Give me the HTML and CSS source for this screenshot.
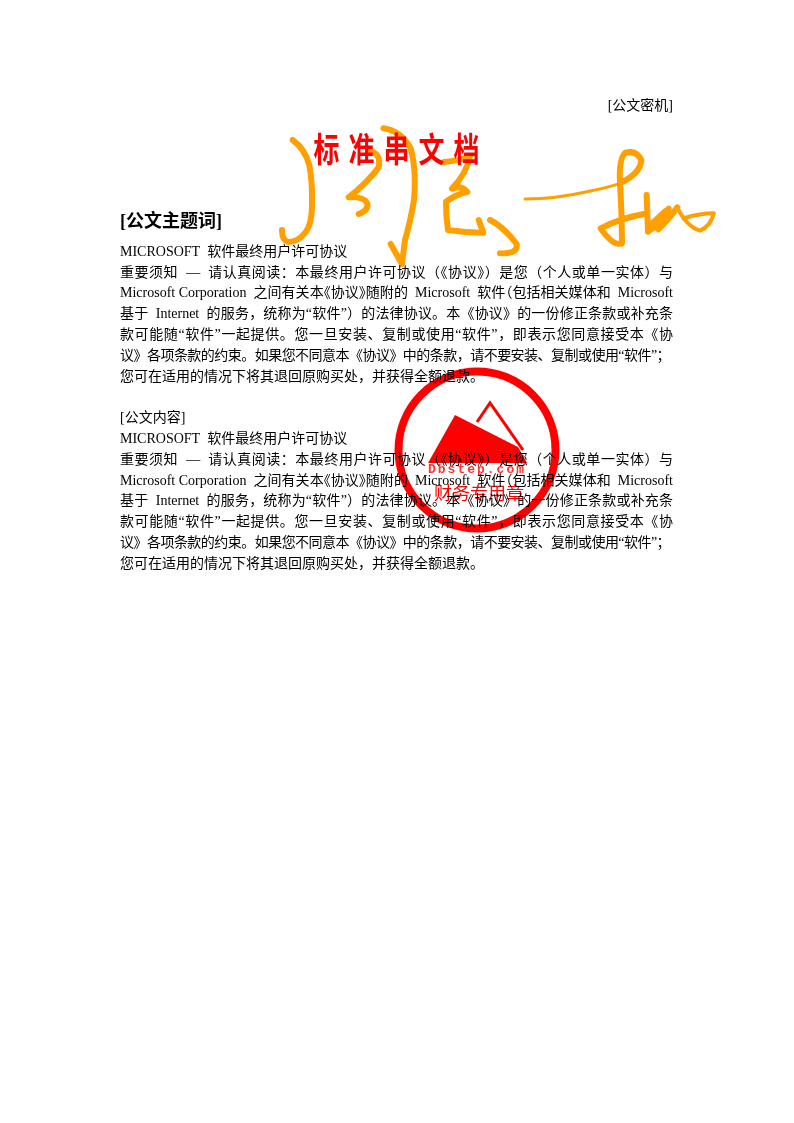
FILE: index.html
```html
<!DOCTYPE html>
<html lang="zh-CN">
<head>
    <meta charset="UTF-8">
    <meta name="viewport" content="width=device-width, initial-scale=1.0">
    <title>标准串文档</title>
    <link rel="stylesheet" href="styles.css">
</head>
<body>
    <div class="page">
        <!-- Handwritten signature -->
        <svg class="signature" viewBox="0 0 1380 570" aria-hidden="true">
            <path class="pen" d="M68 150 Q104 176 118 225 Q128 280 126 345 Q126 400 108 425 Q85 456 55 456 Q36 452 36 420"/>
            <path class="pen" d="M296 182 Q335 190 326 232 Q290 280 236 322 Q280 318 292 340 Q296 362 266 372"/>
            <path class="pen" d="M340 115 Q392 122 422 175 Q440 240 432 330 Q420 400 405 450 L396 522 L362 462"/>
            <path class="pen" d="M522 216 Q570 212 600 198 Q590 250 546 296 Q575 285 592 306 Q560 312 528 335 Q528 380 534 420 Q585 428 640 428 L626 390"/>
            <path class="pen" d="M660 390 Q700 410 740 462 Q745 492 690 490"/>
            <path class="pen-thin" d="M765 327 Q860 326 950 305 Q1010 294 1050 280"/>
            <path class="pen" d="M1050 280 Q1112 250 1114 210 Q1100 180 1066 188 Q1046 205 1050 280 Q1056 370 1056 460 Q1030 470 992 415 Q1050 385 1122 372"/>
            <path class="pen" d="M1130 315 L1134 425 Q1170 400 1196 356 Q1180 395 1165 418 Q1195 390 1222 352"/>
            <path class="pen-fine" d="M1222 352 Q1250 410 1290 422 Q1320 410 1332 370 Q1290 370 1240 385"/>
            <path class="pen-blob" d="M1145 410 L1190 368"/>
        </svg>

        <!-- Round stamp -->
        <svg class="stamp" viewBox="0 0 170 170">
            <circle class="stamp-ring" cx="85" cy="85" r="78.5"/>
            <path class="stamp-peak" d="M85 57 L98 38 L131 85"/>
            <path class="stamp-hill" d="M36 98 L63 50 L126 82 L135 98 Z"/>
            <text class="stamp-url" x="36" y="108">Dbstep.com</text>
            <text class="stamp-name" x="42" y="135">财务专用章</text>
        </svg>

        <p class="secret">[公文密机]</p>
        <h1 class="doc-title">标准串文档</h1>
        <h2 class="subject">[公文主题词]</h2>

        <div class="section">
            <p>MICROSOFT&nbsp; 软件最终用户许可协议</p>
            <p class="just">重要须知&nbsp; —&nbsp; 请认真阅读：本最终用户许可协议（《协议》）是您（个人或单一实体）与</p>
            <p class="just tight">Microsoft Corporation&nbsp; 之间有关本《协议》随附的&nbsp; Microsoft&nbsp; 软件（包括相关媒体和&nbsp; Microsoft</p>
            <p class="just">基于&nbsp; Internet&nbsp; 的服务，统称为“软件”）的法律协议。本《协议》的一份修正条款或补充条</p>
            <p class="just">款可能随“软件”一起提供。您一旦安装、复制或使用“软件”，即表示您同意接受本《协</p>
            <p class="just short">议》各项条款的约束。如果您不同意本《协议》中的条款，请不要安装、复制或使用“软件”；</p>
            <p>您可在适用的情况下将其退回原购买处，并获得全额退款。</p>
        </div>

        <div class="section">
            <p>[公文内容]</p>
            <p>MICROSOFT&nbsp; 软件最终用户许可协议</p>
            <p class="just">重要须知&nbsp; —&nbsp; 请认真阅读：本最终用户许可协议（《协议》）是您（个人或单一实体）与</p>
            <p class="just tight">Microsoft Corporation&nbsp; 之间有关本《协议》随附的&nbsp; Microsoft&nbsp; 软件（包括相关媒体和&nbsp; Microsoft</p>
            <p class="just">基于&nbsp; Internet&nbsp; 的服务，统称为“软件”）的法律协议。本《协议》的一份修正条款或补充条</p>
            <p class="just">款可能随“软件”一起提供。您一旦安装、复制或使用“软件”，即表示您同意接受本《协</p>
            <p class="just short">议》各项条款的约束。如果您不同意本《协议》中的条款，请不要安装、复制或使用“软件”；</p>
            <p>您可在适用的情况下将其退回原购买处，并获得全额退款。</p>
        </div>
    </div>
</body>
</html>
```

FILE: styles.css
```css
html, body {
    margin: 0;
    padding: 0;
    background-color: #fff;
}
.page {
    position: relative;
    width: 794px;
    height: 1123px;
    box-sizing: border-box;
    padding: 96px 121px 0 120px;
    font-family: "Liberation Serif", "Noto Sans CJK SC", serif;
    font-size: 14px;
    line-height: 20.8px;
    color: #000;
    overflow: hidden;
}
p {
    margin: 0;
}
.secret {
    text-align: right;
}
.doc-title {
    position: relative;
    margin: 15px 0 0 0;
    padding-left: 9px;
    height: 40px;
    font-size: 26px;
    line-height: 40px;
    font-weight: bold;
    letter-spacing: 9px;
    text-align: center;
    color: #f00;
    transform: scaleY(1.3);
}
.subject {
    margin: 36px 0 0 0;
    font-size: 18px;
    line-height: 26px;
    font-weight: bold;
}
.section {
    position: relative;
    margin-top: 8px;
}
.section + .section {
    margin-top: 20.8px;
}
.just {
    text-align: justify;
    text-align-last: justify;
}
.tight {
    font-feature-settings: "halt";
}
.short {
    width: 550px;
    letter-spacing: -0.6px;
}
.signature {
    position: absolute;
    left: 270px;
    top: 90px;
    width: 460px;
    height: 190px;
}
.pen, .pen-thin, .pen-fine, .pen-blob {
    fill: none;
    stroke: #ff9f00;
    stroke-linecap: round;
    stroke-linejoin: round;
}
.pen {
    stroke-width: 18;
}
.pen-thin {
    stroke-width: 9;
}
.pen-fine {
    stroke-width: 12;
}
.pen-blob {
    stroke-width: 30;
}
.stamp {
    position: absolute;
    z-index: 2;
    left: 392px;
    top: 365px;
    width: 170px;
    height: 170px;
    mix-blend-mode: multiply;
}
.stamp-ring {
    fill: none;
    stroke: #f00;
    stroke-width: 8;
}
.stamp-peak {
    fill: none;
    stroke: #f00;
    stroke-width: 3;
}
.stamp-hill {
    fill: #f00;
}
.stamp-url {
    font-family: "Liberation Mono", monospace;
    font-size: 13px;
    font-weight: bold;
    letter-spacing: 2px;
    fill: #f33;
}
.stamp-name {
    font-family: "Noto Sans CJK SC", sans-serif;
    font-size: 18px;
    fill: #f00;
}
```
